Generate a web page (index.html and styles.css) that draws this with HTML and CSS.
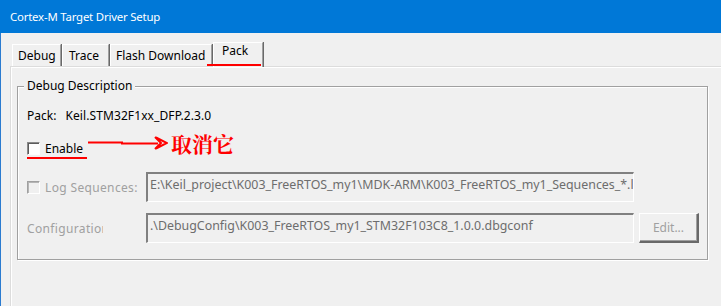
FILE: index.html
```html
<!DOCTYPE html>
<html lang="en">
<head>
<meta charset="utf-8">
<title>Cortex-M Target Driver Setup</title>
<link rel="stylesheet" href="styles.css">
</head>
<body>
<div class="window">
  <div class="titlebar">Cortex-M Target Driver Setup</div>
  <div class="client">
    <div class="tabs">
      <div class="tab tab-debug">Debug</div>
      <div class="tab tab-trace">Trace</div>
      <div class="tab tab-flash">Flash Download</div>
      <div class="tab tab-pack active">Pack</div>
    </div>
    <div class="panel">
      <fieldset class="group">
        <legend>Debug Description</legend>
        <div class="group-body">
          <div class="row pack-row">
            <span class="pack-label">Pack:</span>
            <span class="pack-name">Keil.STM32F1xx_DFP.2.3.0</span>
          </div>
          <div class="row enable-row">
            <label class="check enable-check"><span class="box"></span><span class="check-text">Enable</span></label>
            <div class="note">
              <svg class="arrow" width="80" height="22" viewBox="0 0 80 22">
                <path d="M0 10.5 H34 V11.5 H70" stroke="#f00" stroke-width="2" fill="none"/>
                <path d="M68 5.5 L79 11 L68 16.5 M67 5 L73 11 L67 17" stroke="#f00" stroke-width="2" fill="none"/>
              </svg>
              <span class="note-text">取消它</span>
            </div>
          </div>
          <div class="row field-row log-row">
            <label class="check disabled"><span class="box"></span><span class="check-text">Log Sequences:</span></label>
            <div class="textbox">E:\Keil_project\K003_FreeRTOS_my1\MDK-ARM\K003_FreeRTOS_my1_Sequences_*.log</div>
          </div>
          <div class="row field-row config-row">
            <span class="field-label disabled-text">Configuration</span>
            <div class="textbox">.\DebugConfig\K003_FreeRTOS_my1_STM32F103C8_1.0.0.dbgconf</div>
            <div class="button">Edit...</div>
          </div>
        </div>
      </fieldset>
    </div>
  </div>
</div>
</body>
</html>
```
FILE: styles.css
```css
* { box-sizing: border-box; }

html, body {
  margin: 0;
  padding: 0;
  width: 721px;
  height: 306px;
  overflow: hidden;
  background: #f0f0f0;
}

body {
  font-family: "Noto Sans", "Liberation Sans", "Noto Sans CJK SC", sans-serif;
  font-size: 12px;
  color: #000;
}

.window {
  width: 721px;
  height: 306px;
  border-left: 1px solid #2a7bd0;
  background: #f0f0f0;
}

.titlebar {
  height: 33px;
  margin-left: -1px;
  background: #0078d7;
  color: #fff;
  padding-left: 10px;
  line-height: 34px;
  font-size: 11.4px;
  letter-spacing: -0.2px;
}

.client {
  padding: 9px 0 0 9px;
}

.tabs {
  display: flex;
  align-items: flex-end;
  height: 24px;
  padding-left: 2px;
  position: relative;
  z-index: 2;
}

.tab {
  height: 22px;
  border-top: 1px solid #fff;
  border-left: 1px solid #fff;
  border-right: 1px solid #a0a0a0;
  box-shadow: 1px 0 0 #696969;
  margin-right: 1px;
  padding-left: 5px;
  line-height: 21px;
  white-space: nowrap;
  background: #f0f0f0;
}

.tab-debug { width: 49px; }
.tab-trace { width: 47px; padding-left: 6px; }
.tab-flash { width: 102px; padding-left: 5px; }
.tab-pack { width: 50px; }

.tab.active {
  height: 25px;
  margin-bottom: -1px;
  padding-left: 8px;
  line-height: 16px;
  position: relative;
}

.tab.active::after {
  content: "";
  position: absolute;
  left: -7px;
  top: 21px;
  width: 54px;
  height: 2px;
  background: #f00;
}

.panel {
  border-top: 1px solid #dcdcdc;
  border-left: 1px solid #dcdcdc;
  box-shadow: inset 1px 1px 0 #fff;
  height: 240px;
  padding: 11px 0 0 6px;
}

.group {
  margin: 0;
  padding: 0;
  width: 691px;
  border: 1px solid #a0a0a0;
  box-shadow: 1px 1px 0 #fff, inset 1px 1px 0 #fff;
  min-inline-size: 0;
}

.group legend {
  margin-left: 6px;
  padding: 0 3px;
  line-height: 16px;
  background: #f0f0f0;
}

.group-body {
  padding: 11px 9px 16px 9px;
}

.row {
  display: flex;
  align-items: center;
}

.pack-row {
  height: 20px;
}

.pack-name {
  margin-left: 9px;
  letter-spacing: 0.1px;
}

.enable-row {
  height: 20px;
  margin-top: 13px;
}

.check {
  display: flex;
  align-items: center;
  position: relative;
}

.box {
  width: 13px;
  height: 13px;
  border: 1px solid;
  border-color: #8a8a8a #fdfdfd #fdfdfd #8a8a8a;
  box-shadow: inset 1px 1px 0 #5c5c5c;
  background: #fff;
  margin-right: 5px;
  flex: none;
}

.enable-check::after {
  content: "";
  position: absolute;
  left: 0;
  top: 17px;
  width: 60px;
  height: 2px;
  background: #f00;
}

.note {
  display: flex;
  align-items: center;
  align-self: flex-start;
  height: 22px;
  margin-top: -6px;
  margin-left: 5px;
}

.arrow {
  display: block;
}

.note-text {
  margin-left: 3px;
  color: #f00;
  font-family: "Noto Serif CJK SC", "Noto Sans CJK SC", serif;
  font-size: 21px;
  line-height: 22px;
  font-weight: 700;
}

.field-row {
  height: 30px;
}

.log-row {
  margin-top: 14px;
}

.config-row {
  margin-top: 11px;
}

.check.disabled .box {
  background: #f0f0f0;
  border-color: #a0a0a0 #fff #fff #a0a0a0;
  box-shadow: inset 1px 1px 0 #b5b5b5;
}

.check.disabled .check-text,
.disabled-text {
  color: #a0a0a0;
  letter-spacing: 0.35px;
}

.log-row .check {
  width: 119px;
  flex: none;
}

.field-label {
  width: 76px;
  margin-right: 43px;
  overflow: hidden;
  white-space: nowrap;
  flex: none;
}

.textbox {
  width: 488px;
  height: 30px;
  flex: none;
  border-style: solid;
  border-width: 2px 1px 1px 2px;
  border-color: #808080 #fff #fff #808080;
  background: #f0f0f0;
  color: #6d6d6d;
  padding: 3px 0 0 2px;
  font-size: 12.4px;
  line-height: 16px;
  white-space: nowrap;
  overflow: hidden;
}

.button {
  width: 60px;
  height: 30px;
  margin-left: 5px;
  flex: none;
  border-style: solid;
  border-width: 1px 2px 2px 1px;
  border-color: #fff #696969 #696969 #fff;
  box-shadow: inset -1px -1px 0 #a0a0a0;
  color: #a0a0a0;
  text-align: center;
  line-height: 27px;
}
```
